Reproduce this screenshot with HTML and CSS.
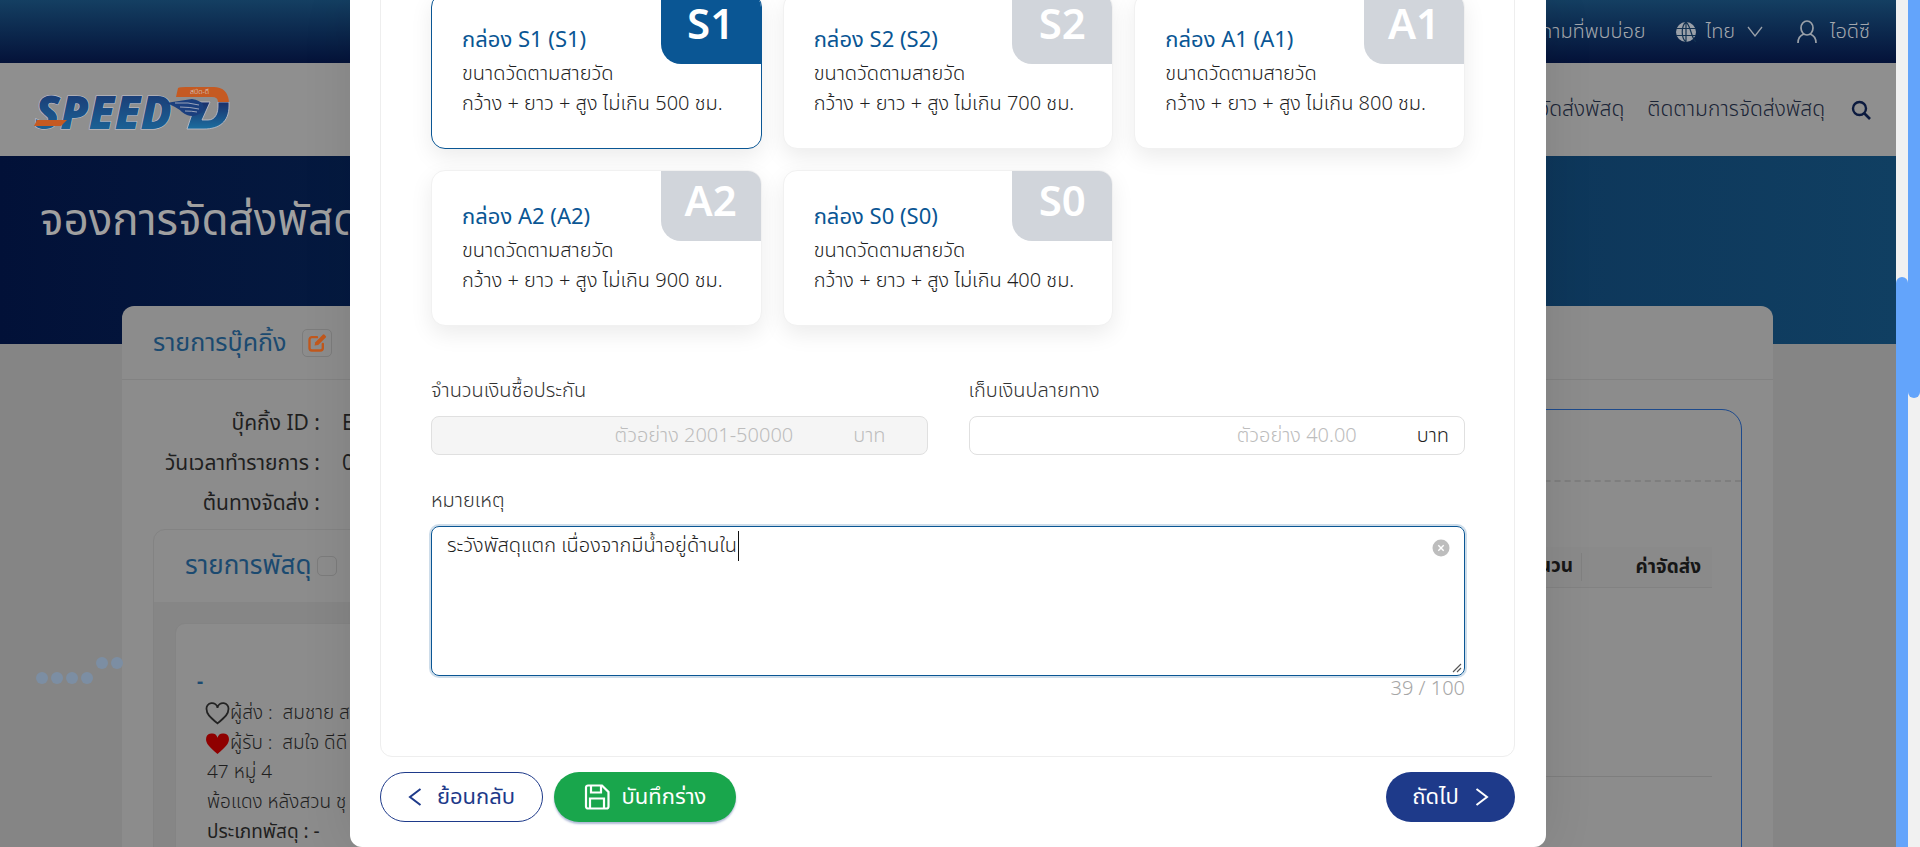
FILE: index.html
```html
<!DOCTYPE html>
<html lang="th">
<head>
    <meta charset="UTF-8">
    <meta name="viewport" content="width=device-width, initial-scale=1.0">
    <title>จองการจัดส่งพัสดุ</title>
    <link rel="stylesheet" href="styles.css">
</head>
<body>
    <div class="page">
        <div class="topbar">
            <span class="top-link">คำถามที่พบบ่อย</span>
            <svg class="globe" viewBox="0 0 20 20">
                <circle cx="10" cy="10" r="10" fill="#9aa0a8"/>
                <path d="M0 6.5h20M0 13.500h20M10 0v20M10 0C5 4 5 16 10 20M10 0c5 4 5 16 10 20" stroke="#123150" stroke-width="1.200" fill="none"/>
            </svg>
            <span class="lang">ไทย</span>
            <svg class="chev" viewBox="0 0 16 11"><path d="M1 1l7 9 7-9" fill="none" stroke="#9aa0a8" stroke-width="1.300"/></svg>
            <svg class="user" viewBox="0 0 20 24">
                <ellipse cx="10" cy="8" rx="6" ry="7" fill="none" stroke="#9aa0a8" stroke-width="1.700"/>
                <path d="M1 23c0-5 3-8 6-9M19 23c0-5-3-8-6-9" fill="none" stroke="#9aa0a8" stroke-width="1.700"/>
            </svg>
            <span class="top-link">ไอดีซี</span>
        </div>
        <div class="navbar">
            <svg class="logo" viewBox="0 0 210 56">
                <defs>
                    <linearGradient id="logofill" x1="0" y1="0" x2="0" y2="1">
                        <stop offset="0" stop-color="#1b2f6a"/>
                        <stop offset="1" stop-color="#1b6ea0"/>
                    </linearGradient>
                </defs>
                <text class="logo-word" x="3" y="47" fill="url(#logofill)" stroke="#c4c4cf" stroke-width="1.200" paint-order="stroke">SPEED</text>
                <path d="M2 44l3-6h30l-6 6z" fill="#c55a22"/>
                <path d="M164 20h14l-8 18h6c8 0 10-8 10-14v-4h11v4c0 16-10 23-25 23h-17z" fill="url(#logofill)" stroke="#c4c4cf" stroke-width=".8"/>
                <path d="M146 6q2-1 8-1h28c15 0 15 15 15 15h-11q0-5-6-5h-36z" fill="#c55a22"/>
                <path d="M134 21l26-4q16 3 10 13-10 8-20 0-5-5-16-9z" fill="#1b3f7e"/>
                <path d="M143 21q14-1 24 2M148 25q10 0 19 2M153 29q7 0 12 1" fill="none" stroke="#b9bdc9" stroke-width=".8"/>
                <text class="logo-small" x="158" y="12" fill="#d8d8d8">สปีด-ดี</text>
            </svg>
            <div class="nav-links">
                <span>การจัดส่งพัสดุ</span>
                <span>ติดตามการจัดส่งพัสดุ</span>
                <svg class="search" viewBox="0 0 20 20">
                    <circle cx="8.500" cy="8.500" r="6.500" fill="none" stroke="#0b1a3f" stroke-width="2.400"/>
                    <path d="M13.500 13.500l5.500 5.500" stroke="#0b1a3f" stroke-width="2.600"/>
                </svg>
            </div>
        </div>
        <div class="hero">
            <h1>จองการจัดส่งพัสดุ</h1>
        </div>

        <div class="dots">
            <span></span><span></span><span></span><span></span>
            <span class="up"></span><span class="up"></span>
        </div>

        <div class="booking">
            <div class="booking-head">
                <span class="booking-title">รายการบุ๊คกิ้ง</span>
                <span class="edit-box">
                    <svg viewBox="0 0 24 24">
                        <path d="M12 5H6a3 3 0 0 0-3 3v10a3 3 0 0 0 3 3h10a3 3 0 0 0 3-3v-5" fill="none" stroke="#c2581c" stroke-width="2.800" stroke-linecap="round"/>
                        <path d="M9 15l1-4L19 2a1.500 1.500 0 0 1 2 0l1.500 1.500a1.500 1.500 0 0 1 0 2L13.500 14.500z" fill="#c2581c"/>
                    </svg>
                </span>
            </div>
            <div class="booking-body">
                <div class="booking-left">
                    <div class="info-row"><span class="info-label">บุ๊คกิ้ง ID :</span><span>E</span></div>
                    <div class="info-row"><span class="info-label">วันเวลาทำรายการ :</span><span>0</span></div>
                    <div class="info-row"><span class="info-label">ต้นทางจัดส่ง :</span></div>
                    <div class="parcel-card">
                        <div class="parcel-head">
                            <span>รายการพัสดุ</span>
                            <span class="check"></span>
                        </div>
                        <div class="parcel-body">
                            <div class="parcel-item">
                                <div class="parcel-dash">-</div>
                                <div class="parcel-line">
                                    <svg class="heart" viewBox="0 0 24 22"><path d="M12 20.500C4 14 1.500 11 1.500 7a5.300 5.300 0 0 1 10.500-1.500A5.300 5.300 0 0 1 22.500 7c0 4-2.500 7-10.500 13.500z" fill="none" stroke="#222" stroke-width="1.700"/></svg>
                                    <span>ผู้ส่ง :&nbsp; สมชาย ส</span>
                                </div>
                                <div class="parcel-line">
                                    <svg class="heart" viewBox="0 0 24 22"><path d="M12 21C4 14.500 1 11 1 7a5.600 5.600 0 0 1 11-1.500A5.600 5.600 0 0 1 23 7c0 4-3 7.500-11 14z" fill="#8f0000"/></svg>
                                    <span>ผู้รับ :&nbsp; สมใจ ดีดี</span>
                                </div>
                                <div class="parcel-text">47 หมู่ 4</div>
                                <div class="parcel-text">พ้อแดง หลังสวน ชุ</div>
                                <div class="parcel-text parcel-type">ประเภทพัสดุ : -</div>
                            </div>
                        </div>
                    </div>
                </div>
                <div class="summary">
                    <div class="summary-top"></div>
                    <div class="summary-table">
                        <div class="summary-row">
                            <span class="col-qty">จำนวน</span>
                            <span class="col-fee">ค่าจัดส่ง</span>
                        </div>
                        <div class="summary-empty"></div>
                    </div>
                </div>
            </div>
        </div>

        <div class="modal">
            <div class="step-card">
                <div class="box-grid">
                    <div class="box-card selected">
                        <span class="box-badge">S1</span>
                        <div class="box-title">กล่อง S1 (S1)</div>
                        <div>ขนาดวัดตามสายวัด</div>
                        <div>กว้าง + ยาว + สูง ไม่เกิน 500 ชม.</div>
                    </div>
                    <div class="box-card">
                        <span class="box-badge">S2</span>
                        <div class="box-title">กล่อง S2 (S2)</div>
                        <div>ขนาดวัดตามสายวัด</div>
                        <div>กว้าง + ยาว + สูง ไม่เกิน 700 ชม.</div>
                    </div>
                    <div class="box-card">
                        <span class="box-badge">A1</span>
                        <div class="box-title">กล่อง A1 (A1)</div>
                        <div>ขนาดวัดตามสายวัด</div>
                        <div>กว้าง + ยาว + สูง ไม่เกิน 800 ชม.</div>
                    </div>
                    <div class="box-card">
                        <span class="box-badge">A2</span>
                        <div class="box-title">กล่อง A2 (A2)</div>
                        <div>ขนาดวัดตามสายวัด</div>
                        <div>กว้าง + ยาว + สูง ไม่เกิน 900 ชม.</div>
                    </div>
                    <div class="box-card">
                        <span class="box-badge">S0</span>
                        <div class="box-title">กล่อง S0 (S0)</div>
                        <div>ขนาดวัดตามสายวัด</div>
                        <div>กว้าง + ยาว + สูง ไม่เกิน 400 ชม.</div>
                    </div>
                </div>

                <div class="form-row">
                    <div class="field">
                        <label class="field-label">จำนวนเงินซื้อประกัน</label>
                        <div class="amount disabled">
                            <input type="text" placeholder="ตัวอย่าง 2001-50000" disabled>
                            <span class="unit">บาท</span>
                        </div>
                    </div>
                    <div class="field">
                        <label class="field-label">เก็บเงินปลายทาง</label>
                        <div class="amount">
                            <input type="text" placeholder="ตัวอย่าง 40.00">
                            <span class="unit">บาท</span>
                        </div>
                    </div>
                </div>

                <div class="note-field">
                    <label class="field-label">หมายเหตุ</label>
                    <div class="note">
                        <span class="note-text">ระวังพัสดุแตก เนื่องจากมีน้ำอยู่ด้านใน</span>
                        <svg class="note-clear" viewBox="0 0 18 18">
                            <circle cx="9" cy="9" r="8.500" fill="#bdbdbd"/>
                            <path d="M6.300 6.300l5.400 5.400M11.700 6.300l-5.400 5.400" stroke="#fff" stroke-width="1.400"/>
                        </svg>
                        <svg class="note-grip" viewBox="0 0 10 10"><path d="M9 1L1 9M9 5L5 9" stroke="#555" stroke-width="1.100"/></svg>
                    </div>
                    <div class="note-count">39 / 100</div>
                </div>
            </div>

            <div class="modal-actions">
                <button class="btn btn-back">
                    <svg class="btn-chev" viewBox="0 0 14 20"><path d="M12.500 2L2 10l10.500 8" fill="none" stroke="#1e3a8a" stroke-width="2"/></svg>
                    ย้อนกลับ
                </button>
                <button class="btn btn-draft">
                    <svg class="btn-save" viewBox="0 0 26 26">
                        <path d="M4 1.500h14l6.500 6.500v14.500a2 2 0 0 1-2 2h-18.500a2 2 0 0 1-2-2v-19a2 2 0 0 1 2-2z" fill="none" stroke="#fff" stroke-width="2.200"/>
                        <path d="M7 1.500v7h10v-7M6 24.500v-10h14v10" fill="none" stroke="#fff" stroke-width="2.200"/>
                    </svg>
                    บันทึกร่าง
                </button>
                <button class="btn btn-next">
                    ถัดไป
                    <svg class="btn-chev" viewBox="0 0 14 20"><path d="M1.500 2L12 10 1.500 18" fill="none" stroke="#fff" stroke-width="2"/></svg>
                </button>
            </div>
        </div>
    </div>

    <div class="scroll-track"><div class="scroll-thumb outer"></div></div>
    <div class="scroll-track"><div class="scroll-thumb inner"></div></div>
</body>
</html>
```

FILE: styles.css
```css
* {
    box-sizing: border-box;
}

body {
    margin: 0;
    height: 847px;
    display: flex;
    overflow: hidden;
    font-family: "Noto Sans Thai", "Noto Sans", sans-serif;
    font-weight: 300;
    background-color: #858585;
    color: #1f1f1f;
}

.page {
    position: relative;
    flex: 1;
    min-width: 0;
    overflow: hidden;
}

/* scrollbars */
.scroll-track {
    width: 12px;
    background-color: #f1f1f1;
}

.scroll-thumb {
    background-color: #63a4fb;
    border-radius: 6px;
}

.scroll-thumb.outer {
    margin-top: 277px;
    height: 600px;
}

.scroll-thumb.inner {
    margin-top: -20px;
    height: 418px;
}

/* page behind the modal */
.topbar {
    height: 63px;
    display: flex;
    align-items: center;
    justify-content: flex-end;
    padding-right: 26px;
    background: linear-gradient(#143f62, #041239);
    color: #a3a7ad;
    font-size: 20px;
}

.globe {
    width: 20px;
    height: 20px;
    margin-left: 30px;
}

.lang {
    margin-left: 10px;
}

.chev {
    width: 16px;
    height: 11px;
    margin-left: 12px;
}

.user {
    width: 20px;
    height: 24px;
    margin: 0 13px 0 34px;
}

.navbar {
    height: 93px;
    display: flex;
    align-items: center;
    justify-content: space-between;
    padding: 0 25px 0 32px;
    background-color: #8f8f8f;
}

.logo {
    width: 210px;
    height: 56px;
    overflow: visible;
}

.logo-word {
    font-family: "Open Sans", sans-serif;
    font-size: 46px;
    font-weight: 800;
    font-style: italic;
}

.logo-small {
    font-size: 7px;
}

.nav-links {
    display: flex;
    align-items: center;
    gap: 23px;
    font-size: 21px;
    color: #1a2436;
}

.search {
    width: 20px;
    height: 20px;
    margin-left: 3px;
}

.hero {
    height: 188px;
    padding: 34px 40px;
    background: linear-gradient(90deg, #021138, #103f62);
}

.hero h1 {
    margin: 0;
    font-size: 44px;
    font-weight: 400;
    line-height: 64px;
    color: #a0a0a0;
}

.dots {
    position: absolute;
    left: 36px;
    top: 657px;
    height: 27px;
    display: flex;
    align-items: flex-end;
    gap: 3px;
}

.dots span {
    width: 12px;
    height: 12px;
    border-radius: 50%;
    background-color: #7c8ea3;
}

.dots .up {
    margin-bottom: 15px;
}

.booking {
    margin: -38px 0 0 122px;
    width: 1651px;
    height: 700px;
    border-radius: 12px 12px 0 0;
    background-color: #8c8c8c;
}

.booking-head {
    height: 74px;
    display: flex;
    align-items: center;
    padding-left: 31px;
    border-bottom: 1px solid #828282;
}

.booking-title {
    font-size: 25px;
    font-weight: 400;
    color: #1b4a70;
}

.edit-box {
    width: 30px;
    height: 28px;
    margin-left: 16px;
    padding: 3px 4px;
    border: 1px solid #7c7c7c;
    border-radius: 5px;
}

.edit-box svg {
    display: block;
}

.booking-body {
    display: flex;
    justify-content: space-between;
    padding-right: 31px;
}

.booking-left {
    width: 760px;
    padding: 24px 0 0 31px;
}

.info-row {
    display: flex;
    gap: 22px;
    height: 40px;
    line-height: 40px;
    font-size: 21px;
    font-weight: 400;
}

.info-label {
    width: 167px;
    text-align: right;
    white-space: nowrap;
}

.parcel-card {
    margin-top: 5px;
    border: 1px solid #838383;
    border-radius: 12px 12px 0 0;
}

.parcel-head {
    height: 72px;
    display: flex;
    align-items: center;
    gap: 5px;
    padding-left: 31px;
    font-size: 26px;
    font-weight: 400;
    color: #1b4a70;
}

.check {
    width: 20px;
    height: 20px;
    border: 1px solid #7c7c7c;
    border-radius: 5px;
}

.parcel-body {
    padding: 21px 21px 0;
    background-color: #868686;
}

.parcel-item {
    height: 300px;
    padding: 44px 0 0 21px;
    border: 1px solid #848484;
    border-radius: 10px;
    background-color: #8c8c8c;
    font-size: 19px;
}

.parcel-dash {
    height: 30px;
    color: #1b4a70;
    font-weight: 700;
}

.parcel-line {
    display: flex;
    align-items: center;
    height: 30px;
    margin-left: 8px;
}

.heart {
    width: 25px;
    height: 23px;
}

.parcel-text {
    height: 30px;
    line-height: 30px;
    margin-left: 10px;
}

.parcel-type {
    font-weight: 400;
}

.summary {
    width: 840px;
    height: 700px;
    margin-top: 29px;
    border: 1px solid #1d4a8c;
    border-radius: 20px 20px 0 0;
}

.summary-top {
    height: 72px;
    border-bottom: 2px dashed #7e7e7e;
}

.summary-table {
    margin: 65px 29px 0 0;
}

.summary-row {
    height: 41px;
    display: flex;
    justify-content: flex-end;
    align-items: center;
    border-bottom: 1px solid #828282;
    background-color: #8a8a8a;
    font-size: 19px;
    font-weight: 700;
    color: #161616;
}

.col-qty {
    padding-right: 8px;
    height: 28px;
    line-height: 28px;
    border-right: 1px solid #808080;
}

.col-fee {
    width: 130px;
    padding-right: 11px;
    text-align: right;
}

.summary-empty {
    height: 189px;
    border-bottom: 1px solid #7e7e7e;
}

/* modal */
.modal {
    position: absolute;
    left: 350px;
    top: 0;
    bottom: 0;
    width: 1196px;
    overflow: hidden;
    padding: 0 31px 0 30px;
    border-radius: 0 0 12px 12px;
    background-color: #fff;
    box-shadow: 0 0 50px rgba(0, 0, 0, 0.1);
}

.step-card {
    height: 797px;
    margin-top: -40px;
    padding: 32px 49px 0 50px;
    border: 1px solid #eee;
    border-radius: 12px;
}

.box-grid {
    display: grid;
    grid-template-columns: repeat(3, 1fr);
    gap: 21px;
}

.box-card {
    position: relative;
    height: 156px;
    overflow: hidden;
    padding: 32px 20px 0 30px;
    border: 1px solid #f1f1f1;
    border-radius: 14px;
    background-color: #fff;
    box-shadow: 0 8px 22px rgba(0, 0, 0, 0.08);
    font-size: 20px;
    line-height: 30px;
}

.box-card.selected {
    border-color: #0a5694;
}

.box-title {
    margin-bottom: 3px;
    font-size: 22px;
    font-weight: 400;
    color: #0a5694;
}

.box-badge {
    position: absolute;
    top: 0;
    right: 0;
    width: 100px;
    height: 70px;
    border-bottom-left-radius: 20px;
    background-color: #d1d5db;
    color: #fff;
    font-size: 42px;
    font-weight: 600;
    line-height: 64px;
    text-align: center;
}

.selected .box-badge {
    background-color: #0a5694;
}

.form-row {
    display: flex;
    gap: 41px;
    margin-top: 48px;
}

.field {
    flex: 1;
}

.field-label {
    display: block;
    height: 42px;
    padding-bottom: 8px;
    font-size: 20px;
    line-height: 34px;
    color: #333;
}

.amount {
    height: 39px;
    display: flex;
    align-items: center;
    padding-right: 15px;
    border: 1px solid #e0e0e0;
    border-radius: 8px;
    background-color: #fff;
    font-size: 20px;
}

.amount.disabled {
    padding-right: 41px;
    background-color: #f5f5f5;
    color: #bdbdbd;
}

.amount input {
    flex: 1;
    min-width: 0;
    margin-right: 60px;
    padding: 0;
    border: 0;
    outline: 0;
    background: transparent;
    font: inherit;
    text-align: right;
}

.amount input::placeholder {
    color: #bdbdbd;
    opacity: 1;
}

.note-field {
    margin-top: 29px;
}

.note {
    position: relative;
    height: 150px;
    padding: 4px 15px;
    border: 1px solid #0a5694;
    border-radius: 8px;
    box-shadow: 0 0 0 2px rgba(10, 86, 148, 0.2);
    font-size: 20px;
    line-height: 30px;
    color: #1f1f1f;
}

.note-text {
    padding-right: 1px;
    border-right: 1px solid #111;
}

.note-clear {
    position: absolute;
    top: 12px;
    right: 14px;
    width: 18px;
    height: 18px;
}

.note-grip {
    position: absolute;
    right: 2px;
    bottom: 2px;
    width: 10px;
    height: 10px;
}

.note-count {
    height: 26px;
    font-size: 20px;
    line-height: 26px;
    text-align: right;
    color: #a6a6a6;
}

.modal-actions {
    display: flex;
    gap: 11px;
    margin-top: 15px;
}

.btn {
    height: 50px;
    display: flex;
    align-items: center;
    justify-content: center;
    border: 1px solid transparent;
    border-radius: 25px;
    font-family: inherit;
    font-size: 22px;
    font-weight: 400;
}

.btn-back {
    width: 163px;
    gap: 15px;
    border-color: #1e3a8a;
    background-color: #fff;
    color: #1e3a8a;
}

.btn-draft {
    width: 182px;
    gap: 12px;
    background-color: #19a64c;
    box-shadow: 0 2px 2px rgba(30, 58, 138, 0.35);
    color: #fff;
}

.btn-next {
    width: 129px;
    gap: 16px;
    margin-left: auto;
    background-color: #1e3a8a;
    color: #fff;
}

.btn-chev {
    width: 14px;
    height: 20px;
}

.btn-save {
    width: 26px;
    height: 26px;
}
```
